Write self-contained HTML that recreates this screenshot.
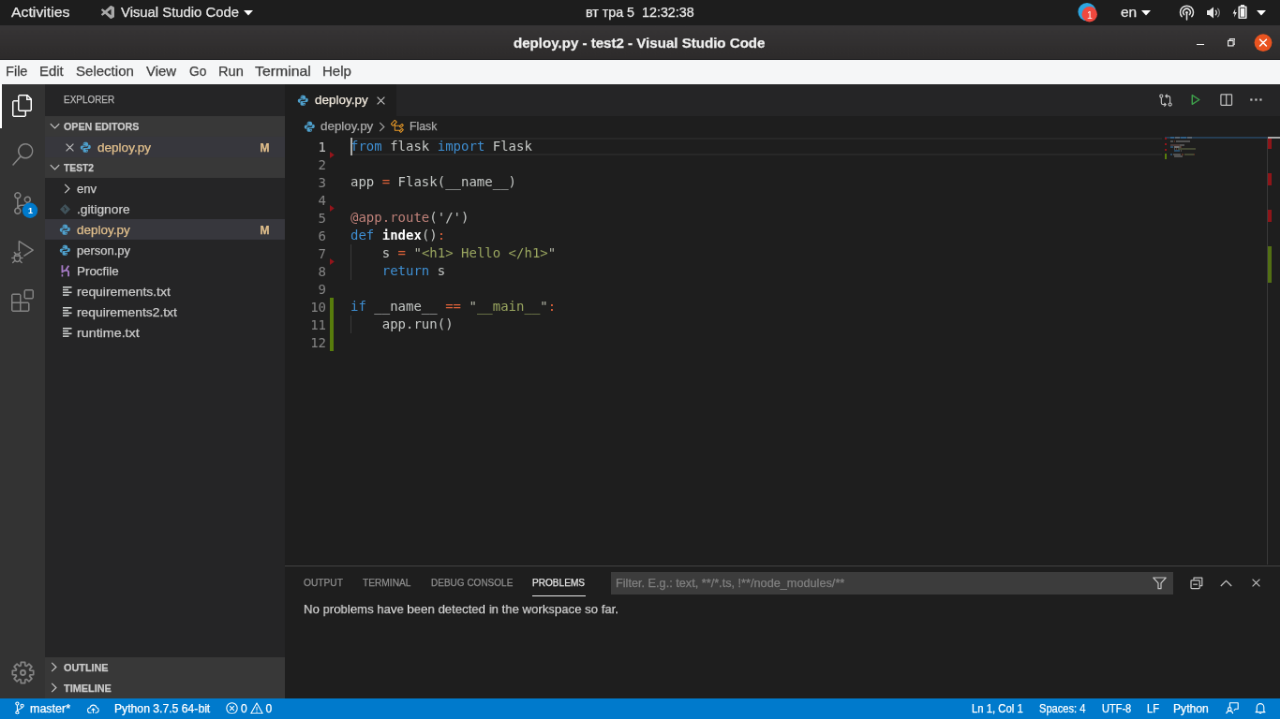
<!DOCTYPE html>
<html lang="en">
<head>
<meta charset="utf-8">
<title>deploy.py - test2 - Visual Studio Code</title>
<style>
html,body{margin:0;padding:0;background:#1e1e1e;overflow:hidden;width:1280px;height:719px}
#screen{position:absolute;left:0;top:0;width:1366px;height:768px;transform:scale(0.937042,0.936198);transform-origin:0 0;font-family:"Liberation Sans",sans-serif;overflow:hidden;will-change:transform}
#screen div,#screen .t,#screen svg{position:absolute}
.t{white-space:pre;line-height:1;transform-origin:0 0;-webkit-text-stroke:0.25px}
#top{left:0;top:0;width:1366px;height:27px;background:#1d1d1d}
#title{left:0;top:27px;width:1366px;height:37px;background:linear-gradient(#373536,#2d2b2b);border-bottom:1px solid #222224;box-sizing:border-box}
#menu{left:0;top:64px;width:1366px;height:25.600px;background:#f5f6f7;z-index:5}
#act{left:0;top:89px;width:48px;height:657px;background:#333333}
#side{left:48px;top:89px;width:256px;height:657px;background:#252526}
#ed{left:304px;top:89px;width:1062px;height:514px;background:#1e1e1e}
#panel{left:304px;top:604px;width:1062px;height:142px;background:#1e1e1e}
#status{left:0;top:746px;width:1366px;height:22px;background:#007acc}
.hdr{left:0;width:256px;height:22px;background:#383838}
.sel{left:0;width:256px;height:22px;background:#37373d}
#tabs{left:0;top:0;width:1062px;height:35px;background:#252526}
#tab{left:0;top:0;width:119px;height:35px;background:#1e1e1e}
#code{left:0;top:57.700px;width:936px;height:457px;font-family:"DejaVu Sans Mono","Liberation Mono",monospace;font-size:14px;line-height:19px;color:#c5c8c6}
.ln{left:0;width:44px;height:19px;margin-top:.9px;text-align:right;color:#858585;white-space:pre}
.cl{left:70px;height:19px;white-space:pre}
.k{color:#3f8fd2}.o{color:#e0633a}.s{color:#9aa660}.q{color:#b5b8a8}.d{color:#c0827a}.f{color:#ffffff;font-weight:bold}.p{color:#c5c8c6}
.guide{width:1px;background:#3a3a3a;left:70px}
</style>
</head>
<body>
<div id="screen">

<div id="top">

<svg style="left:107.500px;top:5.500px" width="14" height="14" viewBox="0 0 24 24"><path fill="#a8a8a8" d="M23.15 2.587L18.21.21a1.494 1.494 0 0 0-1.705.29l-9.46 8.63-4.12-3.128a.999.999 0 0 0-1.276.057L.327 7.261A1 1 0 0 0 .326 8.74L3.899 12 .326 15.26a1 1 0 0 0 .001 1.479L1.65 17.94a.999.999 0 0 0 1.276.057l4.12-3.128 9.46 8.63a1.492 1.492 0 0 0 1.704.29l4.942-2.377A1.5 1.5 0 0 0 24 20.06V3.939a1.5 1.5 0 0 0-.85-1.352zm-5.146 14.861L10.826 12l7.178-5.448v10.896z"/></svg>
<svg style="left:260px;top:10.5px" width="10" height="6" viewBox="0 0 10 6"><path fill="#ffffff" d="M0 0h10L5 5.6z"/></svg>
<svg style="left:1149px;top:2px" width="24" height="24" viewBox="0 0 24 24"><circle cx="11" cy="10.6" r="9.6" fill="#2ca5e0"/><circle cx="13.7" cy="13.3" r="8.2" fill="#f0483e"/></svg>
<svg style="left:1218px;top:10.5px" width="10" height="6" viewBox="0 0 10 6"><path fill="#ffffff" d="M0 0h10L5 5.6z"/></svg>
<svg style="left:1258px;top:5px" width="17" height="17" viewBox="0 0 17 17" fill="none" stroke="#e6e6e6" stroke-width="1.5" stroke-linecap="round"><path d="M3.1 12.6a7 7 0 1 1 10.8 0"/><path d="M5.6 10.6a3.8 3.8 0 1 1 5.8 0"/><circle cx="8.5" cy="8.2" r="1.3" fill="#e6e6e6" stroke="none"/><path d="M8.5 9v7"/></svg>
<svg style="left:1287.500px;top:6.600px" width="16" height="13" viewBox="0 0 16 13"><path fill="#e6e6e6" d="M0 4h2.6L7 .4v12.2L2.6 9H0z"/><path fill="none" stroke="#e6e6e6" stroke-width="1.3" stroke-linecap="round" d="M9.3 4.2a3.2 3.2 0 0 1 0 4.6"/><path fill="none" stroke="#8a8a8a" stroke-width="1.3" stroke-linecap="round" d="M11.6 2.3a6 6 0 0 1 0 8.4"/></svg>
<svg style="left:1315px;top:5px" width="17" height="16" viewBox="0 0 17 16"><path fill="#e6e6e6" d="M3.400 4.200L.600 9.400h2L2 13.400l2.900-5.300H2.900z"/><path fill="#e6e6e6" d="M9 0h4v1.6h1.6a1 1 0 0 1 1 1V14a1 1 0 0 1-1 1H7.4a1 1 0 0 1-1-1V2.6a1 1 0 0 1 1-1H9zM8 3.2v10.2h6V3.2z"/><rect x="8.700" y="4" width="4.600" height="8.800" fill="#f4f4f4"/></svg>
<svg style="left:1341px;top:10.5px" width="10" height="6" viewBox="0 0 10 6"><path fill="#ffffff" d="M0 0h10L5 5.6z"/></svg>
<span class="t" style="left:11.8px;top:6.3px;font-size:14.3px;color:#e8e8e8;transform:scaleX(1.107);">Activities</span>
<span class="t" style="left:128.6px;top:6.3px;font-size:14.3px;color:#e8e8e8;transform:scaleX(1.038);">Visual Studio Code</span>
<span class="t" style="left:624.9px;top:5.9px;font-size:14.3px;color:#e8e8e8;">вт тра 5  12:32:38</span>
<span class="t" style="left:1195.8px;top:6.3px;font-size:14.3px;color:#e8e8e8;transform:scaleX(1.082);">en</span>
<span class="t" style="left:1159.9px;top:10.5px;font-size:10.5px;color:#ffffff;-webkit-text-stroke:0;">1</span>
</div>

<div id="title">

<div style="left:1276.5px;top:19.5px;width:8px;height:1.4px;background:#f2f2f2"></div>
<svg style="left:1309.500px;top:14px" width="8.600" height="8.600" viewBox="0 0 10 10" fill="none" stroke="#f2f2f2" stroke-width="1.300"><path d="M2.8 2.6V.7h6.5v6.5H7.4"/><rect x=".7" y="2.8" width="6.4" height="6.4"/></svg>
<svg style="left:1338px;top:9px" width="20" height="20" viewBox="0 0 20 20"><circle cx="10" cy="9.6" r="9.4" fill="#e95420"/><path d="M6.6 6.2l6.8 6.8m0-6.8l-6.8 6.8" stroke="#ffffff" stroke-width="1.6" stroke-linecap="round"/></svg>
<span class="t" style="left:547.5px;top:12.2px;font-size:14.3px;color:#f0f0f0;font-weight:700;transform:scaleX(1.055);">deploy.py - test2 - Visual Studio Code</span>
</div>

<div id="menu">
<span class="t" style="left:5.9px;top:5.3px;font-size:14.3px;color:#3d3d3d;transform:scaleX(1.019);">File</span>
<span class="t" style="left:42.2px;top:5.3px;font-size:14.3px;color:#3d3d3d;transform:scaleX(1.039);">Edit</span>
<span class="t" style="left:80.6px;top:5.3px;font-size:14.3px;color:#3d3d3d;transform:scaleX(1.052);">Selection</span>
<span class="t" style="left:156.4px;top:5.3px;font-size:14.3px;color:#3d3d3d;transform:scaleX(1.042);">View</span>
<span class="t" style="left:202.3px;top:5.3px;font-size:14.3px;color:#3d3d3d;transform:scaleX(0.958);">Go</span>
<span class="t" style="left:233.2px;top:5.3px;font-size:14.3px;color:#3d3d3d;transform:scaleX(1.022);">Run</span>
<span class="t" style="left:271.6px;top:5.3px;font-size:14.3px;color:#3d3d3d;transform:scaleX(1.106);">Terminal</span>
<span class="t" style="left:344.2px;top:5.3px;font-size:14.3px;color:#3d3d3d;transform:scaleX(1.052);">Help</span>
</div>

<div id="act">
<div style="left:0;top:0;width:2px;height:48px;background:#ffffff"></div>

<svg style="left:12px;top:12px" width="24" height="24" viewBox="0 0 24 24"><path fill="#ffffff" d="M17.5 0h-9L7 1.5V6H2.5L1 7.5v15.07L2.5 24h12.07L16 22.57V18h4.7l1.3-1.43V4.5L17.5 0zm0 2.12l2.38 2.38H17.5V2.12zm-3 20.38h-12v-15H7v9.07L8.5 18h6v4.5zm6-6h-12v-15H16V6h4.5v10.5z"/></svg>
<svg style="left:12px;top:64px" width="24" height="24" viewBox="0 0 24 24"><path fill="#858585" d="M15.25 0a8.25 8.25 0 0 0-6.18 13.72L1 22.88l1.12 1.12 8.05-9.12A8.251 8.251 0 1 0 15.25.01V0zm0 15a6.75 6.75 0 1 1 0-13.5 6.75 6.75 0 0 1 0 13.5z"/></svg>
<svg style="left:12px;top:116px" width="24" height="24" viewBox="0 0 24 24"><path fill="#858585" d="M21.007 8.222A3.738 3.738 0 0 0 15.045 5.2a3.737 3.737 0 0 0 1.156 6.583 2.988 2.988 0 0 1-2.668 1.67h-2.99a4.456 4.456 0 0 0-2.989 1.165V7.4a3.737 3.737 0 1 0-1.494 0v9.117a3.776 3.776 0 1 0 1.816.099 2.99 2.99 0 0 1 2.668-1.667h2.99a4.484 4.484 0 0 0 4.223-3.039 3.736 3.736 0 0 0 3.25-3.687zM4.565 3.738a2.242 2.242 0 1 1 4.484 0 2.242 2.242 0 0 1-4.484 0zm4.484 16.441a2.242 2.242 0 1 1-4.484 0 2.242 2.242 0 0 1 4.484 0zm8.221-9.715a2.242 2.242 0 1 1 0-4.485 2.242 2.242 0 0 1 0 4.485z"/></svg>
<svg style="left:22px;top:126px" width="20" height="20" viewBox="0 0 20 20"><circle cx="10" cy="9.8" r="8.2" fill="#007acc"/></svg>
<svg style="left:11px;top:167px" width="26" height="26" viewBox="0 0 26 26" fill="none" stroke="#858585" stroke-width="1.500" stroke-linejoin="round" stroke-linecap="round"><path d="M9.300 11.400V1.700l14.900 9.500-9.300 6"/><ellipse cx="7.400" cy="19.300" rx="3.100" ry="4.100"/><path d="M4.400 17.200h6M5.600 15l-1.300-1.500M9.200 15l1.300-1.500M4.300 19.600H1.800M10.500 19.600H13M4.900 22.300l-2.200 2.200M9.900 22.300l2.200 2.200"/></svg>
<svg style="left:12px;top:220px" width="24" height="24" viewBox="0 0 24 24"><path fill="#858585" d="M13.5 1.5L15 0h7.5L24 1.5V9l-1.5 1.5H15L13.5 9V1.5zm1.5 0V9h7.5V1.5H15zM0 15V6l1.5-1.5H9L10.5 6v7.5H18l1.5 1.5v7.5L18 24H1.5L0 22.5V15zm9-1.5V6H1.5v7.5H9zM9 15H1.5v7.5H9V15zm1.5 7.5H18V15h-7.5v7.5z"/></svg>
<svg style="left:11.500px;top:616.800px" width="25" height="25" viewBox="0 0 25 25" fill="none" stroke="#858585" stroke-width="1.700" stroke-linejoin="round"><circle cx="12.500" cy="12.500" r="2.500" stroke-width="1.900"/><path d="M10.17 4.95 L10.35 1.31 L14.65 1.31 L14.83 4.95 L16.19 5.51 L18.89 3.06 L21.94 6.11 L19.49 8.81 L20.05 10.17 L23.69 10.35 L23.69 14.65 L20.05 14.83 L19.49 16.19 L21.94 18.89 L18.89 21.94 L16.19 19.49 L14.83 20.05 L14.65 23.69 L10.35 23.69 L10.17 20.05 L8.81 19.49 L6.11 21.94 L3.06 18.89 L5.51 16.19 L4.95 14.83 L1.31 14.65 L1.31 10.35 L4.95 10.17 L5.51 8.81 L3.06 6.11 L6.11 3.06 L8.81 5.51Z"/></svg>
<span class="t" style="left:30.0px;top:132.0px;font-size:9px;color:#ffffff;font-weight:700;-webkit-text-stroke:0;">1</span>
</div>

<div id="side">
<div class="hdr" style="top:35px"></div>
<div class="sel" style="top:57px"></div>
<div class="hdr" style="top:79px"></div>
<div class="sel" style="top:145px"></div>
<div class="hdr" style="top:613px;height:44px"></div>
<svg style="left:4.5px;top:42px" width="11" height="8" viewBox="0 0 11 8" fill="none" stroke="#c5c5c5" stroke-width="1.2"><path d="M.8 1.200l4.700 4.700 4.700-4.700"/></svg><svg style="left:21.5px;top:63.5px" width="9" height="9" viewBox="0 0 9 9" fill="none" stroke="#c5c5c5" stroke-width="1.100"><path d="M.6.6l7.800 7.800M8.400.6L.6 8.400"/></svg><svg style="left:37.200px;top:61.900px" width="12.600" height="12.600" viewBox="0 0 16 16"><path fill="#4fa0cc" d="M7.9 1C5.9 1 4.7 1.7 4.7 3v2h3.4v.7H3.3C1.9 5.7 1 6.8 1 8.4c0 1.700.8 2.700 2 2.700h1.300V9.300c0-1.300 1-2.300 2.300-2.300h3c1.100 0 1.900-.8 1.900-1.900V3c0-1.200-1.300-2-3.600-2zM6.300 2.200a.7.7 0 1 1 0 1.400.7.7 0 0 1 0-1.400z"/><path fill="#4fa0cc" d="M8.100 15c2 0 3.200-.7 3.200-2v-2H7.900v-.7h4.800c1.400 0 2.300-1.100 2.300-2.700 0-1.700-.8-2.700-2-2.700h-1.300v1.800c0 1.300-1 2.300-2.300 2.300h-3c-1.100 0-1.900.8-1.900 1.900V13c0 1.200 1.300 2 3.600 2zm1.600-1.200a.7.7 0 1 1 0-1.400.7.7 0 0 1 0 1.400z"/></svg><svg style="left:4.5px;top:86px" width="11" height="8" viewBox="0 0 11 8" fill="none" stroke="#c5c5c5" stroke-width="1.2"><path d="M.8 1.200l4.700 4.700 4.700-4.700"/></svg><svg style="left:20px;top:107px" width="8" height="11" viewBox="0 0 8 11" fill="none" stroke="#c5c5c5" stroke-width="1.200"><path d="M1.200.8l4.700 4.700-4.700 4.700"/></svg><svg style="left:15.500px;top:128.500px" width="11" height="11" viewBox="0 0 11 11"><path fill="#41535b" d="M5.500 0L11 5.500 5.500 11 0 5.500z"/><path fill="none" stroke="#252526" stroke-width=".9" d="M3.800 3l3 3M5.300 4.500v3"/></svg><svg style="left:15.200px;top:150.200px" width="12.600" height="12.600" viewBox="0 0 16 16"><path fill="#4fa0cc" d="M7.9 1C5.9 1 4.7 1.7 4.7 3v2h3.4v.7H3.3C1.9 5.7 1 6.8 1 8.4c0 1.700.8 2.700 2 2.700h1.300V9.300c0-1.300 1-2.300 2.300-2.300h3c1.100 0 1.900-.8 1.900-1.900V3c0-1.200-1.300-2-3.600-2zM6.300 2.200a.7.7 0 1 1 0 1.400.7.7 0 0 1 0-1.400z"/><path fill="#4fa0cc" d="M8.100 15c2 0 3.200-.7 3.200-2v-2H7.900v-.7h4.800c1.400 0 2.300-1.100 2.300-2.700 0-1.700-.8-2.700-2-2.700h-1.300v1.800c0 1.300-1 2.300-2.300 2.300h-3c-1.100 0-1.900.8-1.900 1.900V13c0 1.200 1.300 2 3.600 2zm1.600-1.200a.7.7 0 1 1 0-1.400.7.7 0 0 1 0 1.400z"/></svg><svg style="left:15.200px;top:172.200px" width="12.600" height="12.600" viewBox="0 0 16 16"><path fill="#4fa0cc" d="M7.9 1C5.9 1 4.7 1.7 4.7 3v2h3.4v.7H3.3C1.9 5.7 1 6.8 1 8.4c0 1.700.8 2.700 2 2.700h1.300V9.300c0-1.300 1-2.300 2.300-2.300h3c1.100 0 1.900-.8 1.900-1.900V3c0-1.200-1.300-2-3.600-2zM6.300 2.200a.7.7 0 1 1 0 1.400.7.7 0 0 1 0-1.400z"/><path fill="#4fa0cc" d="M8.100 15c2 0 3.200-.7 3.200-2v-2H7.900v-.7h4.800c1.400 0 2.300-1.100 2.300-2.700 0-1.700-.8-2.700-2-2.700h-1.300v1.800c0 1.300-1 2.300-2.300 2.300h-3c-1.100 0-1.900.8-1.900 1.900V13c0 1.200 1.300 2 3.600 2zm1.600-1.200a.7.7 0 1 1 0-1.400.7.7 0 0 1 0 1.400z"/></svg><svg style="left:16.500px;top:193.500px" width="9.500" height="13" viewBox="0 0 10 13" fill="none" stroke="#a87cc8" stroke-width="1.900"><path d="M1.500 0v8.600M8.700.300L5.400 5.800M2 7c2.200-1.300 6.500-2 6.500.800v4.700"/><path d="M1.500 10.200v2.600" stroke-width="1.700"/></svg><svg style="left:19px;top:217.2px" width="10" height="10" viewBox="0 0 10 10" fill="#d4d7d6"><rect x="0" y="0" width="9.500" height="1.500"/><rect x="0" y="2.800" width="6" height="1.500"/><rect x="0" y="5.600" width="9.500" height="1.500"/><rect x="0" y="8.400" width="6.500" height="1.500"/></svg><svg style="left:19px;top:239.2px" width="10" height="10" viewBox="0 0 10 10" fill="#d4d7d6"><rect x="0" y="0" width="9.500" height="1.500"/><rect x="0" y="2.800" width="6" height="1.500"/><rect x="0" y="5.600" width="9.500" height="1.500"/><rect x="0" y="8.400" width="6.500" height="1.500"/></svg><svg style="left:19px;top:261.2px" width="10" height="10" viewBox="0 0 10 10" fill="#d4d7d6"><rect x="0" y="0" width="9.500" height="1.500"/><rect x="0" y="2.800" width="6" height="1.500"/><rect x="0" y="5.600" width="9.500" height="1.500"/><rect x="0" y="8.400" width="6.500" height="1.500"/></svg><svg style="left:6px;top:618.3px" width="8" height="11" viewBox="0 0 8 11" fill="none" stroke="#c5c5c5" stroke-width="1.200"><path d="M1.200.8l4.700 4.700-4.700 4.700"/></svg><svg style="left:6px;top:640.3px" width="8" height="11" viewBox="0 0 8 11" fill="none" stroke="#c5c5c5" stroke-width="1.200"><path d="M1.200.8l4.700 4.700-4.700 4.700"/></svg>
<span class="t" style="left:19.6px;top:12.0px;font-size:11px;color:#bbbbbb;transform:scaleX(0.903);">EXPLORER</span>
<span class="t" style="left:19.6px;top:41.1px;font-size:11px;color:#cccccc;font-weight:700;transform:scaleX(0.968);">OPEN EDITORS</span>
<span class="t" style="left:55.7px;top:61.7px;font-size:13px;color:#e2c08d;transform:scaleX(1.042);">deploy.py</span>
<span class="t" style="left:229.6px;top:62.6px;font-size:12px;color:#e2c08d;font-weight:700;">M</span>
<span class="t" style="left:19.6px;top:85.3px;font-size:11px;color:#cccccc;font-weight:700;transform:scaleX(0.935);">TEST2</span>
<span class="t" style="left:34.0px;top:106.0px;font-size:13px;color:#cccccc;transform:scaleX(1.009);">env</span>
<span class="t" style="left:34.0px;top:127.9px;font-size:13px;color:#cccccc;transform:scaleX(1.060);">.gitignore</span>
<span class="t" style="left:34.0px;top:149.7px;font-size:13px;color:#e2c08d;transform:scaleX(1.036);">deploy.py</span>
<span class="t" style="left:34.0px;top:171.7px;font-size:13px;color:#cccccc;">person.py</span>
<span class="t" style="left:34.0px;top:193.8px;font-size:13px;color:#cccccc;transform:scaleX(1.031);">Procfile</span>
<span class="t" style="left:34.0px;top:215.9px;font-size:13px;color:#cccccc;transform:scaleX(1.071);">requirements.txt</span>
<span class="t" style="left:34.0px;top:237.9px;font-size:13px;color:#cccccc;transform:scaleX(1.064);">requirements2.txt</span>
<span class="t" style="left:34.0px;top:260.0px;font-size:13px;color:#cccccc;transform:scaleX(1.099);">runtime.txt</span>
<span class="t" style="left:229.6px;top:150.6px;font-size:12px;color:#e2c08d;font-weight:700;">M</span>
<span class="t" style="left:19.5px;top:619.1px;font-size:11px;color:#cccccc;font-weight:700;transform:scaleX(0.986);">OUTLINE</span>
<span class="t" style="left:19.5px;top:640.5px;font-size:11px;color:#cccccc;font-weight:700;transform:scaleX(0.989);">TIMELINE</span>
</div>

<div id="ed">
<div id="tabs"><div id="tab"></div></div>
<svg style="left:13px;top:12.400px" width="12.600" height="12.600" viewBox="0 0 16 16"><path fill="#4fa0cc" d="M7.9 1C5.9 1 4.7 1.7 4.7 3v2h3.4v.7H3.3C1.9 5.7 1 6.8 1 8.4c0 1.7.8 2.7 2 2.7h1.3V9.300c0-1.300 1-2.300 2.300-2.300h3c1.100 0 1.900-.8 1.900-1.900V3c0-1.200-1.300-2-3.600-2zM6.300 2.200a.7.7 0 1 1 0 1.400.7.7 0 0 1 0-1.400z"/><path fill="#4fa0cc" d="M8.100 15c2 0 3.200-.7 3.200-2v-2H7.900v-.7h4.800c1.400 0 2.300-1.100 2.300-2.700 0-1.700-.8-2.700-2-2.700h-1.300v1.800c0 1.300-1 2.300-2.300 2.300h-3c-1.100 0-1.900.8-1.900 1.900V13c0 1.200 1.300 2 3.600 2zm1.600-1.200a.7.7 0 1 1 0-1.400.7.7 0 0 1 0 1.400z"/></svg><svg style="left:98.100px;top:13.500px" width="9" height="9" viewBox="0 0 9 9" fill="none" stroke="#c5c5c5" stroke-width="1.100"><path d="M.6.600l7.800 7.800M8.400.600L.600 8.400"/></svg><svg style="left:19.900px;top:40px" width="12.600" height="12.600" viewBox="0 0 16 16"><path fill="#4fa0cc" d="M7.9 1C5.9 1 4.7 1.7 4.7 3v2h3.4v.7H3.3C1.9 5.7 1 6.8 1 8.4c0 1.7.8 2.7 2 2.7h1.3V9.300c0-1.300 1-2.300 2.300-2.300h3c1.100 0 1.900-.8 1.900-1.900V3c0-1.200-1.300-2-3.600-2zM6.300 2.200a.7.7 0 1 1 0 1.400.7.7 0 0 1 0-1.400z"/><path fill="#4fa0cc" d="M8.100 15c2 0 3.200-.7 3.200-2v-2H7.900v-.7h4.800c1.400 0 2.300-1.100 2.300-2.700 0-1.700-.8-2.700-2-2.700h-1.300v1.800c0 1.300-1 2.300-2.300 2.300h-3c-1.100 0-1.900.8-1.900 1.900V13c0 1.200 1.300 2 3.600 2zm1.600-1.200a.7.7 0 1 1 0-1.400.7.7 0 0 1 0 1.400z"/></svg><svg style="left:99.500px;top:41px" width="8" height="11" viewBox="0 0 8 11" fill="none" stroke="#a0a0a0" stroke-width="1.200"><path d="M1.200.800l4.700 4.700-4.700 4.700"/></svg><svg style="left:111.500px;top:37.800px" width="16" height="16" viewBox="0 0 16 16"><path fill="#ee9d28" d="M11.340 9.710h.710l2.670-2.670v-.710L13.380 5h-.7l-1.820 1.810h-5V5.560l1.860-1.850V3l-2-2H5L1 5v.710l2 2h.710l1.140-1.150v5.790l.5.5H10v.520l1.330 1.340h.710l2.670-2.670v-.710L13.370 10h-.7l-1.860 1.850h-5v-4H10v.480l1.340 1.380zm1.690-3.650l.630.630-2 2-.630-.630 2-2zm0 5l.630.630-2 2-.630-.630 2-2zM3.350 6.650l-1.290-1.300 3.290-3.290 1.300 1.290-3.300 3.300z"/></svg><svg style="left:933.200px;top:10.600px" width="14" height="14.300" viewBox="0 0 15 15.300" fill="none" stroke="#c5c5c5" stroke-width="1.200" stroke-linejoin="round"><circle cx="2.500" cy="2.800" r="1.700"/><circle cx="12.500" cy="12.400" r="1.700"/><path d="M2.500 4.500v6q0 2 2 2h3M5.800 10.500l2 2-2 2M12.500 10.700v-5.900q0-2-2-2h-3M9.200.800l-2 2 2 2"/></svg><svg style="left:966.400px;top:11.300px" width="11.800" height="12.800" viewBox="0 0 13 14" fill="none" stroke="#3fa04c" stroke-width="1.600" stroke-linejoin="round"><path d="M2.500 1.800v10.600l8.300-5.300z"/></svg><svg style="left:998px;top:10.700px" width="13.800" height="13.800" viewBox="0 0 15 15" fill="none" stroke="#c5c5c5" stroke-width="1.300"><rect x="1" y="1" width="12.600" height="12.400" rx=".8"/><path d="M7.300 1v12.400"/></svg><svg style="left:1030px;top:16.400px" width="12.800" height="3" viewBox="0 0 14 3" fill="#c5c5c5"><rect x=".3" y=".3" width="2.400" height="2.400"/><rect x="5.800" y=".3" width="2.400" height="2.400"/><rect x="11.300" y=".3" width="2.400" height="2.400"/></svg>
<span class="t" style="left:31.9px;top:11.0px;font-size:13px;color:#f0e8dc;transform:scaleX(1.036);">deploy.py</span>
<span class="t" style="left:38.1px;top:38.8px;font-size:13px;color:#a9a9a9;transform:scaleX(1.029);">deploy.py</span>
<span class="t" style="left:133.0px;top:38.8px;font-size:13px;color:#a9a9a9;transform:scaleX(0.945);">Flask</span>
<div id="minimap" style="left:936px;top:57px;width:112px;height:457px"><div style="left:3px;top:0;width:109px;height:2px;background:#263e55"></div><div style="left:3px;top:1px;width:2px;height:2px;background:#94151b"></div><div style="left:3px;top:7px;width:2px;height:2px;background:#94151b"></div><div style="left:3px;top:13px;width:2px;height:2px;background:#94151b"></div><div style="left:3px;top:18px;width:2px;height:6px;background:#587c0c"></div><div style="left:9px;top:0px;width:4px;height:1.500px;background:#3f8fd2;opacity:.42"></div><div style="left:14px;top:0px;width:5px;height:1.500px;background:#9a9c9a;opacity:.42"></div><div style="left:20px;top:0px;width:6px;height:1.500px;background:#3f8fd2;opacity:.42"></div><div style="left:27px;top:0px;width:5px;height:1.500px;background:#9a9c9a;opacity:.42"></div><div style="left:9px;top:4px;width:3px;height:1.500px;background:#9a9c9a;opacity:.42"></div><div style="left:13px;top:4px;width:1px;height:1.500px;background:#a85030;opacity:.42"></div><div style="left:15px;top:4px;width:15px;height:1.500px;background:#9a9c9a;opacity:.42"></div><div style="left:9px;top:8px;width:10px;height:1.500px;background:#8a625c;opacity:.42"></div><div style="left:19px;top:8px;width:5px;height:1.500px;background:#9a9c9a;opacity:.42"></div><div style="left:9px;top:10px;width:3px;height:1.500px;background:#3f8fd2;opacity:.42"></div><div style="left:13px;top:10px;width:5px;height:1.500px;background:#e0e0e0;opacity:.42"></div><div style="left:18px;top:10px;width:2px;height:1.500px;background:#9a9c9a;opacity:.42"></div><div style="left:20px;top:10px;width:1px;height:1.500px;background:#a85030;opacity:.42"></div><div style="left:13px;top:12px;width:1px;height:1.500px;background:#9a9c9a;opacity:.42"></div><div style="left:15px;top:12px;width:1px;height:1.500px;background:#a85030;opacity:.42"></div><div style="left:17px;top:12px;width:19px;height:1.500px;background:#7a8450;opacity:.42"></div><div style="left:13px;top:14px;width:6px;height:1.500px;background:#3f8fd2;opacity:.42"></div><div style="left:20px;top:14px;width:1px;height:1.500px;background:#9a9c9a;opacity:.42"></div><div style="left:9px;top:18px;width:2px;height:1.500px;background:#3f8fd2;opacity:.42"></div><div style="left:12px;top:18px;width:8px;height:1.500px;background:#9a9c9a;opacity:.42"></div><div style="left:21px;top:18px;width:2px;height:1.500px;background:#a85030;opacity:.42"></div><div style="left:24px;top:18px;width:10px;height:1.500px;background:#7a8450;opacity:.42"></div><div style="left:34px;top:18px;width:1px;height:1.500px;background:#a85030;opacity:.42"></div><div style="left:13px;top:20px;width:9px;height:1.500px;background:#9a9c9a;opacity:.42"></div></div>
<div id="vscroll" style="left:1048px;top:57px;width:14px;height:457px;border-left:1px solid #3a3a3a;box-sizing:border-box"><div style="left:0;top:0;width:13px;height:2px;background:#a9a9a9"></div><div style="left:0;top:2px;width:4px;height:11px;background:#8e1519"></div><div style="left:0;top:39px;width:4px;height:13px;background:#8e1519"></div><div style="left:0;top:78px;width:4px;height:13px;background:#8e1519"></div><div style="left:0;top:117px;width:4px;height:39px;background:#526f14"></div></div>
<div id="code">
<div style="left:70px;top:0;width:866px;height:19px;border:2px solid #282828;border-left:0;border-right:0;box-sizing:border-box"></div>
<div style="left:70px;top:0;width:2px;height:19px;background:#aeafad;z-index:2"></div>
<div class="guide" style="top:114px;height:38px"></div>
<div class="guide" style="top:190px;height:19px"></div>
<div style="left:48.200px;top:171px;width:3.800px;height:57.600px;background:#587c0c"></div>
<svg style="left:47.500px;top:15.5px" width="5" height="7" viewBox="0 0 5 7"><path fill="#94151b" d="M0 0l4.800 3.500L0 7z"/></svg><svg style="left:47.500px;top:72.5px" width="5" height="7" viewBox="0 0 5 7"><path fill="#94151b" d="M0 0l4.800 3.500L0 7z"/></svg><svg style="left:47.500px;top:129.5px" width="5" height="7" viewBox="0 0 5 7"><path fill="#94151b" d="M0 0l4.800 3.500L0 7z"/></svg>
<div class="ln" style="top:0;color:#c6c6c6">1</div><div class="cl" style="top:0"><span class="k">from</span> flask <span class="k">import</span> Flask</div>
<div class="ln" style="top:19px">2</div>
<div class="ln" style="top:38px">3</div><div class="cl" style="top:38px">app <span class="o">=</span> Flask(__name__)</div>
<div class="ln" style="top:57px">4</div>
<div class="ln" style="top:76px">5</div><div class="cl d" style="top:76px">@app.route<span class="p">('/')</span></div>
<div class="ln" style="top:95px">6</div><div class="cl" style="top:95px"><span class="k">def</span> <span class="f">index</span>()<span class="o">:</span></div>
<div class="ln" style="top:114px">7</div><div class="cl" style="top:114px">    s <span class="o">=</span> <span class="q">"</span><span class="s">&lt;h1&gt; Hello &lt;/h1&gt;</span><span class="q">"</span></div>
<div class="ln" style="top:133px">8</div><div class="cl" style="top:133px">    <span class="k">return</span> s</div>
<div class="ln" style="top:152px">9</div>
<div class="ln" style="top:171px">10</div><div class="cl" style="top:171px"><span class="k">if</span> __name__ <span class="o">==</span> <span class="q">"</span><span class="s">__main__</span><span class="q">"</span><span class="o">:</span></div>
<div class="ln" style="top:190px">11</div><div class="cl" style="top:190px">    app.run()</div>
<div class="ln" style="top:209px">12</div>
</div>
</div>

<div id="panel">
<div style="left:0;top:.300px;width:1062px;height:1.100px;background:#434343"></div>
<div style="left:348px;top:7px;width:600px;height:24px;background:#3c3c3c"></div>
<div style="left:264px;top:31.700px;width:56.500px;height:1.300px;background:#e7e7e7"></div>
<svg style="left:925.500px;top:11.500px" width="15" height="14" viewBox="0 0 15 14" fill="none" stroke="#c5c5c5" stroke-width="1.200" stroke-linejoin="round"><path d="M.800 1h13.400L9 6.800v5.900H6V6.800z"/></svg><svg style="left:965.500px;top:11.500px" width="14" height="14" viewBox="0 0 14 14" fill="none" stroke="#c5c5c5" stroke-width="1.200" stroke-linejoin="round"><path d="M4 3.600V1.200h8.800v8.400h-2.400"/><rect x="1" y="3.800" width="9.200" height="8.800" rx=".8"/><path d="M3.200 8.200h4.800"/></svg><svg style="left:997.500px;top:14.500px" width="13" height="8" viewBox="0 0 13 8" fill="none" stroke="#c5c5c5" stroke-width="1.200"><path d="M.800 7l5.700-5.700L12.200 7"/></svg><svg style="left:1031.500px;top:14.200px" width="9" height="9" viewBox="0 0 9 9" fill="none" stroke="#c5c5c5" stroke-width="1.100"><path d="M.600.600l7.800 7.800M8.400.600L.600 8.400"/></svg>
<span class="t" style="left:19.6px;top:13.2px;font-size:11px;color:#8f8f8f;transform:scaleX(0.927);">OUTPUT</span>
<span class="t" style="left:82.9px;top:13.2px;font-size:11px;color:#8f8f8f;transform:scaleX(0.925);">TERMINAL</span>
<span class="t" style="left:155.7px;top:13.2px;font-size:11px;color:#8f8f8f;transform:scaleX(0.910);">DEBUG CONSOLE</span>
<span class="t" style="left:263.8px;top:13.2px;font-size:11px;color:#e7e7e7;transform:scaleX(0.916);">PROBLEMS</span>
<span class="t" style="left:352.9px;top:12.0px;font-size:13px;color:#808080;transform:scaleX(0.977);">Filter. E.g.: text, **/*.ts, !**/node_modules/**</span>
<span class="t" style="left:19.9px;top:40.0px;font-size:13px;color:#cccccc;transform:scaleX(1.013);">No problems have been detected in the workspace so far.</span>
</div>

<div id="status">
<svg style="left:16px;top:3px" width="10" height="15" viewBox="0 0 10 15" fill="none" stroke="#ffffff" stroke-width="1.100"><circle cx="2.400" cy="2.600" r="1.600"/><circle cx="2.400" cy="12.200" r="1.600"/><circle cx="7.600" cy="4.800" r="1.600"/><path d="M2.400 4.200v6.400M7.600 6.400c0 2.200-5.200 1.600-5.200 4.200"/></svg><svg style="left:92.500px;top:5.500px" width="13" height="10.200" viewBox="0 0 14 11" fill="none" stroke="#ffffff" stroke-width="1.100" stroke-linejoin="round"><path d="M5 10H3.600A2.800 2.800 0 0 1 3.200 4.400 3.900 3.900 0 0 1 10.800 4.100 3 3 0 0 1 10.600 10H9"/><path d="M7 10.600V5.400M5 7.200l2-2 2 2"/></svg><svg style="left:241px;top:4px" width="13" height="13" viewBox="0 0 13 13" fill="none" stroke="#ffffff" stroke-width="1.100"><circle cx="6.500" cy="6.500" r="5.700"/><path d="M4.200 4.200l4.600 4.600M8.800 4.200L4.200 8.800"/></svg><svg style="left:267px;top:4px" width="14" height="13" viewBox="0 0 14 13" fill="none" stroke="#ffffff" stroke-width="1.100" stroke-linejoin="round"><path d="M7 1L13.200 12H.800z"/><path d="M7 5v3.800M7 9.800v1.200" stroke-width="1"/></svg><svg style="left:1307.500px;top:4px" width="14" height="13" viewBox="0 0 14 13" fill="none" stroke="#ffffff" stroke-width="1.100" stroke-linejoin="round"><path d="M4.400 5.400V.8h8.800v6.400h-2.600l-1.800 1.700"/><circle cx="4.200" cy="7.400" r="1.800"/><path d="M.800 12.600c0-2 1.400-3.200 3.400-3.200s3.400 1.200 3.400 3.200"/></svg><svg style="left:1338.500px;top:4px" width="12" height="13" viewBox="0 0 12 13" fill="none" stroke="#ffffff" stroke-width="1.100" stroke-linejoin="round"><path d="M2.200 9.600V5.400a3.800 3.800 0 0 1 7.600 0v4.200l1.200 1H1zM4.800 12.200h2.400"/></svg>
<span class="t" style="left:31.5px;top:5.0px;font-size:12px;color:#ffffff;transform:scaleX(1.040);">master*</span>
<span class="t" style="left:121.6px;top:5.0px;font-size:12px;color:#ffffff;transform:scaleX(1.015);">Python 3.7.5 64-bit</span>
<span class="t" style="left:257.1px;top:5.0px;font-size:12px;color:#ffffff;">0</span>
<span class="t" style="left:283.4px;top:5.0px;font-size:12px;color:#ffffff;">0</span>
<span class="t" style="left:1037.3px;top:5.0px;font-size:12px;color:#ffffff;transform:scaleX(0.942);">Ln 1, Col 1</span>
<span class="t" style="left:1109.4px;top:5.0px;font-size:12px;color:#ffffff;transform:scaleX(0.925);">Spaces: 4</span>
<span class="t" style="left:1175.5px;top:5.0px;font-size:12px;color:#ffffff;transform:scaleX(0.918);">UTF-8</span>
<span class="t" style="left:1223.6px;top:5.0px;font-size:12px;color:#ffffff;transform:scaleX(0.923);">LF</span>
<span class="t" style="left:1252.1px;top:5.0px;font-size:12px;color:#ffffff;transform:scaleX(1.014);">Python</span>
</div>

</div>
</body>
</html>
